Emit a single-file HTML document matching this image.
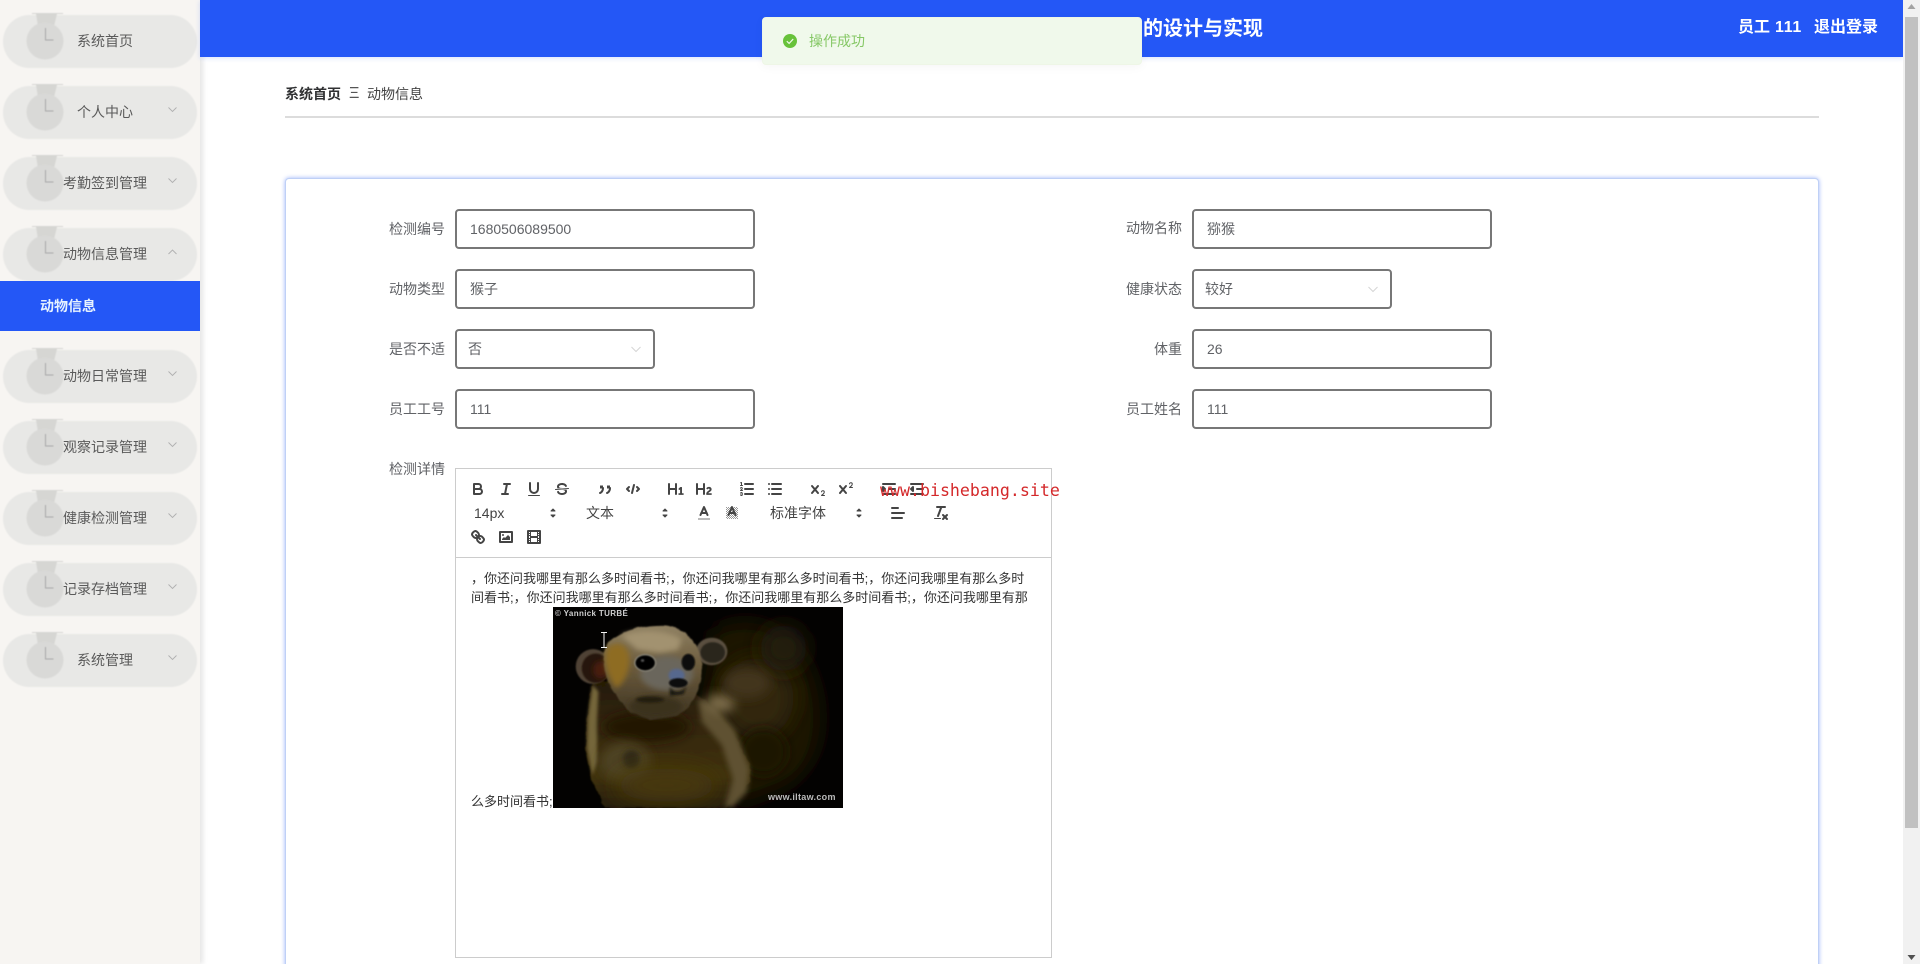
<!DOCTYPE html>
<html lang="zh-CN">
<head>
<meta charset="utf-8">
<title>动物信息</title>
<style>
*{box-sizing:border-box;margin:0;padding:0}
html,body{width:1920px;height:964px;overflow:hidden;background:#fff}
body{position:relative;font-family:"Liberation Sans","Noto Sans CJK SC",sans-serif;font-size:14px;color:#606266}
#w{position:absolute;left:0;top:0;width:1920px;height:964px;overflow:hidden;filter:blur(.3px)}
.a{position:absolute;white-space:nowrap}
#side{left:0;top:0;width:200px;height:964px;background:#f7f5f2;box-shadow:3px 0 5px rgba(0,0,0,.1)}
.pill{position:absolute;left:3px;width:194px;height:53px;border-radius:27px;background:#e8e8e6;filter:blur(.6px)}
.mt{position:absolute;left:5px;width:200px;text-align:center;line-height:20px;color:#5a5a5a;font-size:14px}
#sub{left:0;top:281px;width:200px;height:50px;background:#2457f6;color:#e6f2ff;font-weight:bold;line-height:50px;padding-left:40px}
#head{left:200px;top:0;width:1703px;height:57px;background:#2457f6;box-shadow:0 1px 5px rgba(36,87,246,.18)}
.ht{color:#fff;font-weight:bold;line-height:24px;top:16px}
#sb{left:1903px;top:0;width:17px;height:964px;background:#f1f1f1}
#thumb{position:absolute;left:2px;top:17px;width:13px;height:811px;background:#c1c1c1}
#toast{left:762px;top:17px;width:380px;height:48px;background:#f0f9eb;border:1px solid #eef6e6;border-radius:4px;box-shadow:0 2px 10px rgba(0,0,0,.04)}
#card{left:285px;top:178px;width:1534px;height:800px;background:#fff;border:1px solid #bfd0f6;border-radius:4px;box-shadow:0 0 4px rgba(36,87,246,.45)}
.lb{line-height:20px;color:#606266;text-align:right;width:100px}
.ip{position:absolute;height:40px;background:#fff;border:2px solid #777;border-radius:4px;line-height:36px;padding-left:13px;color:#606266;width:300px}
.sel{width:200px;padding-left:11px}
.sel svg{position:absolute;right:11px;top:15px}
#ed{left:455px;top:468px;width:597px;height:490px;background:#fff;border:1px solid #ccc}
#tb{position:absolute;left:0;top:88px;width:595px;height:1px;background:#ccc}
.pk{color:#444;font-size:14px;line-height:20px}
.ln{font-size:13px;line-height:18.5px;color:#333;left:471px}
#wm{left:880px;top:480px;font-family:"DejaVu Sans Mono","Liberation Mono",monospace;font-size:16.6px;line-height:22px;color:#d4282a}
.s{fill:none;stroke:#444;stroke-width:2;stroke-linecap:round;stroke-linejoin:round}
.t{fill:none;stroke:#444;stroke-width:1;stroke-linecap:round;stroke-linejoin:round}
.f{fill:#444}
.q{fill:#444;stroke:#444;stroke-width:2;stroke-linecap:round}
.ar{fill:#444;stroke:#444;stroke-width:1;stroke-linejoin:round}
</style>
</head>
<body>
<div id="w">

<div class="a" id="side">
  <div class="pill" style="top:15px"></div>
  <div class="pill" style="top:86px"></div>
  <div class="pill" style="top:157px"></div>
  <div class="pill" style="top:228px"></div>
  <div class="pill" style="top:350px"></div>
  <div class="pill" style="top:421px"></div>
  <div class="pill" style="top:492px"></div>
  <div class="pill" style="top:563px"></div>
  <div class="pill" style="top:634px"></div>

  <svg class="a" style="left:0;top:0;filter:blur(.6px)" width="200" height="700" viewBox="0 0 200 700">
    <g fill="#d9d9d7">
      <g transform="translate(0,0)"><path d="M32 13h31v1H57l-3 12H38l-2-12h-4z" fill="#d6d6d3"/><circle cx="45" cy="41" r="18.500"/><path d="M45.500 28v12h8" fill="none" stroke="#a8a8a8" stroke-width="1"/></g>
      <g transform="translate(0,71)"><path d="M32 13h31v1H57l-3 12H38l-2-12h-4z" fill="#d6d6d3"/><circle cx="45" cy="41" r="18.500"/><path d="M45.500 28v12h8" fill="none" stroke="#a8a8a8" stroke-width="1"/></g>
      <g transform="translate(0,142)"><path d="M32 13h31v1H57l-3 12H38l-2-12h-4z" fill="#d6d6d3"/><circle cx="45" cy="41" r="18.500"/><path d="M45.500 28v12h8" fill="none" stroke="#a8a8a8" stroke-width="1"/></g>
      <g transform="translate(0,213)"><path d="M32 13h31v1H57l-3 12H38l-2-12h-4z" fill="#d6d6d3"/><circle cx="45" cy="41" r="18.500"/><path d="M45.500 28v12h8" fill="none" stroke="#a8a8a8" stroke-width="1"/></g>
      <g transform="translate(0,335)"><path d="M32 13h31v1H57l-3 12H38l-2-12h-4z" fill="#d6d6d3"/><circle cx="45" cy="41" r="18.500"/><path d="M45.500 28v12h8" fill="none" stroke="#a8a8a8" stroke-width="1"/></g>
      <g transform="translate(0,406)"><path d="M32 13h31v1H57l-3 12H38l-2-12h-4z" fill="#d6d6d3"/><circle cx="45" cy="41" r="18.500"/><path d="M45.500 28v12h8" fill="none" stroke="#a8a8a8" stroke-width="1"/></g>
      <g transform="translate(0,477)"><path d="M32 13h31v1H57l-3 12H38l-2-12h-4z" fill="#d6d6d3"/><circle cx="45" cy="41" r="18.500"/><path d="M45.500 28v12h8" fill="none" stroke="#a8a8a8" stroke-width="1"/></g>
      <g transform="translate(0,548)"><path d="M32 13h31v1H57l-3 12H38l-2-12h-4z" fill="#d6d6d3"/><circle cx="45" cy="41" r="18.500"/><path d="M45.500 28v12h8" fill="none" stroke="#a8a8a8" stroke-width="1"/></g>
      <g transform="translate(0,619)"><path d="M32 13h31v1H57l-3 12H38l-2-12h-4z" fill="#d6d6d3"/><circle cx="45" cy="41" r="18.500"/><path d="M45.500 28v12h8" fill="none" stroke="#a8a8a8" stroke-width="1"/></g>
    </g>
  </svg>
  <svg class="a" style="left:0;top:0" width="200" height="700" viewBox="0 0 200 700">
    <g fill="none" stroke="#b0b0b0" stroke-width=".9">
      <path d="M168.500 107.500l4 4 4-4"/>
      <path d="M168.500 178.500l4 4 4-4"/>
      <path d="M176.500 254l-4-4-4 4"/>
      <path d="M168.500 371.500l4 4 4-4"/>
      <path d="M168.500 442.500l4 4 4-4"/>
      <path d="M168.500 513.500l4 4 4-4"/>
      <path d="M168.500 584.500l4 4 4-4"/>
      <path d="M168.500 655.500l4 4 4-4"/>
    </g>
  </svg>

  <div class="mt" style="top:31px">系统首页</div>
  <div class="mt" style="top:102px">个人中心</div>
  <div class="mt" style="top:173px">考勤签到管理</div>
  <div class="mt" style="top:244px">动物信息管理</div>
  <div class="mt" style="top:366px">动物日常管理</div>
  <div class="mt" style="top:437px">观察记录管理</div>
  <div class="mt" style="top:508px">健康检测管理</div>
  <div class="mt" style="top:579px">记录存档管理</div>
  <div class="mt" style="top:650px">系统管理</div>
</div>
<div class="a" id="sub">动物信息</div>

<div class="a" id="head"></div>
<div class="a ht" style="left:1143px;top:17px;font-size:20px;">的设计与实现</div>
<div class="a ht" style="left:1738px;font-size:16px;">员工</div>
<div class="a ht" style="left:1775px;font-size:16px;letter-spacing:.7px">111</div>
<div class="a ht" style="left:1814px;font-size:16px;">退出登录</div>

<div class="a" id="sb">
  <svg class="a" style="left:0;top:0" width="17" height="17"><path d="M8.500 4L12.500 9H4.500z" fill="#a3a3a3"/></svg>
  <div id="thumb"></div>
  <svg class="a" style="left:0;top:947px" width="17" height="17"><path d="M8.500 13L4.500 8H12.500z" fill="#505050"/></svg>
</div>

<div class="a" style="left:285px;top:84px;font-weight:bold;color:#303133;line-height:20px">系统首页</div>
<div class="a" style="left:349px;top:84px;color:#555;font-size:16px;line-height:20px;font-weight:normal">Ξ</div>
<div class="a" style="left:367px;top:84px;color:#444;line-height:20px">动物信息</div>
<div class="a" style="left:285px;top:116px;width:1534px;height:2px;background:#dcdcdc"></div>

<div class="a" id="card"></div>

<div class="a lb" style="left:345px;top:219px">检测编号</div>
<div class="ip" style="left:455px;top:209px">1680506089500</div>
<div class="a lb" style="left:345px;top:279px">动物类型</div>
<div class="ip" style="left:455px;top:269px">猴子</div>
<div class="a lb" style="left:345px;top:339px">是否不适</div>
<div class="ip sel" style="left:455px;top:329px">否<svg width="12" height="8"><path d="M1.500 1l4.500 4.500 4.500-4.500" fill="none" stroke="#d5d5d5" stroke-width="1"/></svg></div>
<div class="a lb" style="left:345px;top:399px">员工工号</div>
<div class="ip" style="left:455px;top:389px">111</div>
<div class="a lb" style="left:345px;top:459px">检测详情</div>

<div class="a lb" style="left:1082px;top:218px">动物名称</div>
<div class="ip" style="left:1192px;top:209px">猕猴</div>
<div class="a lb" style="left:1082px;top:279px">健康状态</div>
<div class="ip sel" style="left:1192px;top:269px">较好<svg width="12" height="8"><path d="M1.500 1l4.500 4.500 4.500-4.500" fill="none" stroke="#d5d5d5" stroke-width="1"/></svg></div>
<div class="a lb" style="left:1082px;top:339px">体重</div>
<div class="ip" style="left:1192px;top:329px">26</div>
<div class="a lb" style="left:1082px;top:399px">员工姓名</div>
<div class="ip" style="left:1192px;top:389px">111</div>

<div class="a" id="ed"><div id="tb"></div></div>

<svg class="a" style="left:0;top:0" width="1200" height="560" viewBox="0 0 1200 560">
  <g transform="translate(469,480)"><path class="s" d="M5,4H9.500A2.500,2.500,0,0,1,12,6.500v0A2.500,2.500,0,0,1,9.500,9H5V4Z"/><path class="s" d="M5,9h5.500A2.500,2.500,0,0,1,13,11.500v0A2.500,2.500,0,0,1,10.500,14H5V9Z"/></g>
  <g transform="translate(497,480)"><line class="s" x1="7" x2="13" y1="4" y2="4"/><line class="s" x1="5" x2="11" y1="14" y2="14"/><line class="s" x1="8" x2="10" y1="14" y2="4"/></g>
  <g transform="translate(525,480)"><path class="s" d="M5,3V9a4.012,4.012,0,0,0,4,4H9a4.012,4.012,0,0,0,4-4V3"/><rect class="f" height="1" rx=".5" ry=".5" width="12" x="3" y="15"/></g>
  <g transform="translate(553,480)"><line class="t" x1="15.500" x2="2.500" y1="8.500" y2="9.500"/><path class="f" d="M9.007,8C6.542,7.791,6,7.519,6,6.500,6,5.792,7.283,5,9,5c1.571,0,2.765.679,2.969,1.309a1,1,0,0,0,1.900-.617C13.356,4.106,11.354,3,9,3,6.200,3,4,4.538,4,6.500a3.200,3.200,0,0,0,.5,1.843Z"/><path class="f" d="M8.984,10C11.457,10.208,12,10.479,12,11.500c0,.708-1.283,1.500-3,1.500-1.571,0-2.765-.679-2.969-1.309a1,1,0,1,0-1.900.617C4.644,13.894,6.646,15,9,15c2.800,0,5-1.538,5-3.500a3.200,3.200,0,0,0-.5-1.843Z"/></g>
  <g transform="translate(596,480)"><rect class="f" height="3" width="3" x="4" y="5.500"/><rect class="f" height="3" width="3" x="11" y="5.500"/><path class="q" d="M7,8c0,4.031-3,5-3,5"/><path class="q" d="M14,8c0,4.031-3,5-3,5"/></g>
  <g transform="translate(624,480)"><polyline class="s" points="5 7 3 9 5 11"/><polyline class="s" points="13 7 15 9 13 11"/><line class="s" x1="10" x2="8" y1="5" y2="13"/></g>
  <g transform="translate(667,480)"><path class="f" d="M10,4V14a1,1,0,0,1-2,0V10H3v4a1,1,0,0,1-2,0V4A1,1,0,0,1,3,4V8H8V4a1,1,0,0,1,2,0Zm6.068,9.209H14.990V7.599a.541.541,0,0,0-.605-.605h-.627a1.011,1.011,0,0,0-.748.297L11.645,8.566a.544.544,0,0,0-.022.858l.286.308a.539.539,0,0,0,.847.033l.099-.088a1.214,1.214,0,0,0,.242-.353h.022s-.011.309-.011.605V13.209H12.041a.541.541,0,0,0-.605.605v.439a.541.541,0,0,0,.605.605h4.027a.541.541,0,0,0,.605-.605v-.439A.541.541,0,0,0,16.068,13.209Z"/></g>
  <g transform="translate(695,480)"><path class="f" d="M16.740,13.814v.439a.541.541,0,0,1-.605.605H11.855a.584.584,0,0,1-.649-.605V14.013c0-2.905,3.399-3.422,3.399-4.555a.777.777,0,0,0-.847-.781,1.177,1.177,0,0,0-.836.385c-.275.264-.561.374-.858.132l-.429-.341c-.308-.242-.385-.518-.154-.814a2.972,2.972,0,0,1,2.454-1.177,2.454,2.454,0,0,1,2.684,2.409c0,2.453-3.179,2.927-3.278,3.938h2.794A.541.541,0,0,1,16.740,13.814ZM9,3A1,1,0,0,0,8,4V8H3V4A1,1,0,0,0,1,4V14a1,1,0,0,0,2,0V10H8v4a1,1,0,0,0,2,0V4A1,1,0,0,0,9,3Z"/></g>
  <g transform="translate(738,480)"><line class="s" x1="7" x2="15" y1="4" y2="4"/><line class="s" x1="7" x2="15" y1="9" y2="9"/><line class="s" x1="7" x2="15" y1="14" y2="14"/><line class="t" x1="2.500" x2="4.500" y1="5.500" y2="5.500"/><path class="f" d="M3.500,6A0.500,0.500,0,0,1,3,5.500V3.085l-0.276.138A0.500,0.500,0,0,1,2.053,3c-0.124-.247-0.023-0.324.224-0.447l1-.5A0.500,0.500,0,0,1,4,2.500v3A0.500,0.500,0,0,1,3.500,6Z"/><path class="t" d="M4.500,10.500h-2c0-.234,1.850-1.076,1.850-2.234A0.959,0.959,0,0,0,2.500,8.156"/><path class="t" d="M2.500,14.846a0.959,0.959,0,0,0,1.850-.109A0.700,0.700,0,0,0,3.750,14a0.688,0.688,0,0,0,.6-0.736,0.959,0.959,0,0,0-1.850-.109"/></g>
  <g transform="translate(766,480)"><line class="s" x1="6" x2="15" y1="4" y2="4"/><line class="s" x1="6" x2="15" y1="9" y2="9"/><line class="s" x1="6" x2="15" y1="14" y2="14"/><line class="s" x1="3" x2="3" y1="4" y2="4"/><line class="s" x1="3" x2="3" y1="9" y2="9"/><line class="s" x1="3" x2="3" y1="14" y2="14"/></g>
  <g transform="translate(809,480)"><path class="f" d="M15.500,15H13.861a3.858,3.858,0,0,0,1.914-2.975,1.800,1.800,0,0,0-1.600-1.751A1.921,1.921,0,0,0,12.021,11.700a0.500,0.500,0,1,0,.957.291h0a0.914,0.914,0,0,1,1.053-.725,0.810,0.810,0,0,1,.744.762c0,1.076-1.170,1.870-1.940,2.431A1.456,1.456,0,0,0,12,15.500a0.500,0.500,0,0,0,.5.5h3A0.500,0.500,0,0,0,15.500,15Z"/><path class="f" d="M9.650,5.241a1,1,0,0,0-1.409.108L6,7.964,3.759,5.349A1,1,0,0,0,2.241,6.651L4.684,9.500,2.241,12.350A1,1,0,0,0,3.759,13.650L6,11.036,8.241,13.650a1,1,0,1,0,1.518-1.300L7.316,9.500,9.759,6.651A1,1,0,0,0,9.650,5.241Z"/></g>
  <g transform="translate(837,480)"><path class="f" d="M15.500,7H13.861a4.015,4.015,0,0,0,1.914-2.975,1.800,1.800,0,0,0-1.600-1.751A1.922,1.922,0,0,0,12.021,3.700a0.500,0.500,0,1,0,.957.291,0.917,0.917,0,0,1,1.053-.725,0.810,0.810,0,0,1,.744.762c0,1.077-1.164,1.925-1.934,2.486A1.423,1.423,0,0,0,12,7.500a0.500,0.500,0,0,0,.5.5h3A0.500,0.500,0,0,0,15.500,7Z"/><path class="f" d="M9.651,5.241a1,1,0,0,0-1.410.108L6,7.964,3.759,5.349a1,1,0,1,0-1.519,1.300L4.683,9.500,2.241,12.350a1,1,0,1,0,1.519,1.300L6,11.036,8.241,13.650a1,1,0,0,0,1.519-1.300L7.317,9.500,9.759,6.651A1,1,0,0,0,9.651,5.241Z"/></g>
  <g transform="translate(880,480)"><line class="s" x1="3" x2="15" y1="14" y2="14"/><line class="s" x1="3" x2="15" y1="4" y2="4"/><line class="s" x1="9" x2="15" y1="9" y2="9"/><polyline class="s f" points="3 7 3 11 5 9 3 7"/></g>
  <g transform="translate(908,480)"><line class="s" x1="3" x2="15" y1="14" y2="14"/><line class="s" x1="3" x2="15" y1="4" y2="4"/><line class="s" x1="9" x2="15" y1="9" y2="9"/><polyline class="s f" points="5 7 5 11 3 9 5 7"/></g>

  <g transform="translate(544,504)"><polygon class="ar" points="7 11 9 13 11 11 7 11"/><polygon class="ar" points="7 7 9 5 11 7 7 7"/></g>
  <g transform="translate(656,504)"><polygon class="ar" points="7 11 9 13 11 11 7 11"/><polygon class="ar" points="7 7 9 5 11 7 7 7"/></g>
  <g transform="translate(850,504)"><polygon class="ar" points="7 11 9 13 11 11 7 11"/><polygon class="ar" points="7 7 9 5 11 7 7 7"/></g>
  <g transform="translate(695,504)"><line x1="3" x2="15" y1="15" y2="15" stroke="#bbb" stroke-width="2"/><polyline class="s" points="5.500 11 9 3 12.500 11"/><line class="s" x1="11.630" x2="6.380" y1="9" y2="9"/></g>
  <defs><pattern id="hatch" width="2" height="2" patternUnits="userSpaceOnUse"><rect width="1" height="1" fill="#444"/><rect x="1" y="1" width="1" height="1" fill="#444"/></pattern></defs>
  <g transform="translate(723,504)"><rect x="3" y="3" width="12" height="12" fill="url(#hatch)" opacity=".55"/><polyline class="s" points="5.500 11 9 3 12.500 11"/><line class="s" x1="11.630" x2="6.380" y1="9" y2="9"/></g>
  <g transform="translate(889,504)"><line class="s" x1="3" x2="15" y1="9" y2="9"/><line class="s" x1="3" x2="13" y1="14" y2="14"/><line class="s" x1="3" x2="9" y1="4" y2="4"/></g>
  <g transform="translate(932,504)"><line class="s" x1="5" x2="13" y1="3" y2="3"/><line class="s" x1="6" x2="9.350" y1="12" y2="3"/><line class="s" x1="11" x2="15" y1="11" y2="15"/><line class="s" x1="15" x2="11" y1="11" y2="15"/><rect class="f" height="1" rx=".5" ry=".5" width="7" x="2" y="14"/></g>

  <g transform="translate(469,528)"><line class="s" x1="7" x2="11" y1="7" y2="11"/><path class="s" d="M8.900,4.577a3.476,3.476,0,0,1,.36,4.679A3.476,3.476,0,0,1,4.577,8.900C3.185,7.500,2.035,6.400,4.217,4.217S7.500,3.185,8.900,4.577Z"/><path class="s" d="M13.423,9.100a3.476,3.476,0,0,0-4.679-.36,3.476,3.476,0,0,0,.36,4.679c1.392,1.392,2.500,2.542,4.679.36S14.815,10.500,13.423,9.100Z"/></g>
  <g transform="translate(497,528)"><rect class="s" height="10" width="12" x="3" y="4"/><circle class="f" cx="6" cy="7" r="1"/><polyline class="f" points="5 12 5 11 7 9 8 10 11 7 13 9 13 12 5 12"/></g>
  <g transform="translate(525,528)"><rect class="s" height="12" width="12" x="3" y="3"/><rect class="f" height="12" width="1" x="5" y="3"/><rect class="f" height="12" width="1" x="12" y="3"/><rect class="f" height="2" width="8" x="5" y="8"/><rect class="f" height="1" width="3" x="3" y="5"/><rect class="f" height="1" width="3" x="3" y="7"/><rect class="f" height="1" width="3" x="3" y="10"/><rect class="f" height="1" width="3" x="3" y="12"/><rect class="f" height="1" width="3" x="12" y="5"/><rect class="f" height="1" width="3" x="12" y="7"/><rect class="f" height="1" width="3" x="12" y="10"/><rect class="f" height="1" width="3" x="12" y="12"/></g>
</svg>

<div class="a pk" style="left:474px;top:503px">14px</div>
<div class="a pk" style="left:586px;top:503px">文本</div>
<div class="a pk" style="left:770px;top:503px">标准字体</div>

<div class="a ln" style="top:570px">，你还问我哪里有那么多时间看书;，你还问我哪里有那么多时间看书;，你还问我哪里有那么多时</div>
<div class="a ln" style="top:588.500px">间看书;，你还问我哪里有那么多时间看书;，你还问我哪里有那么多时间看书;，你还问我哪里有那</div>
<div class="a ln" style="top:793px">么多时间看书;</div>

<div class="a" style="left:553px;top:607px;width:290px;height:201px;background:#030201;overflow:hidden">
  <svg class="a" style="left:0;top:0" width="290" height="201" viewBox="10 7 868 601" preserveAspectRatio="none">
    <defs>
      <filter id="b30" x="-50%" y="-50%" width="200%" height="200%"><feGaussianBlur stdDeviation="30"/></filter>
      <filter id="b16" x="-40%" y="-40%" width="180%" height="180%"><feGaussianBlur stdDeviation="16"/></filter>
      <filter id="b8" x="-30%" y="-30%" width="160%" height="160%"><feGaussianBlur stdDeviation="8"/></filter>
      <filter id="b5" x="-30%" y="-30%" width="160%" height="160%"><feGaussianBlur stdDeviation="5"/></filter>
      <filter id="b4" x="-30%" y="-30%" width="160%" height="160%"><feGaussianBlur stdDeviation="4"/></filter>
      <filter id="b2" x="-30%" y="-30%" width="160%" height="160%"><feGaussianBlur stdDeviation="2"/></filter>
      <filter id="fur" x="-10%" y="-10%" width="120%" height="120%"><feTurbulence type="fractalNoise" baseFrequency=".03 .05" numOctaves="2" seed="7" result="n"/><feDisplacementMap in="SourceGraphic" in2="n" scale="10" xChannelSelector="R" yChannelSelector="G"/><feGaussianBlur stdDeviation="2.500"/></filter>
      <linearGradient id="bd" x1="0" y1="0" x2="0" y2="1"><stop offset="0" stop-color="#241a06"/><stop offset=".35" stop-color="#33260a"/><stop offset=".75" stop-color="#403209"/><stop offset="1" stop-color="#261e07"/></linearGradient>
      <linearGradient id="hd" x1="0" y1="0" x2="0" y2="1"><stop offset="0" stop-color="#8f8062"/><stop offset=".45" stop-color="#6a5a3c"/><stop offset="1" stop-color="#3c3220"/></linearGradient>
    </defs>
    <path d="M490 80C560 30 700 40 770 170C840 310 820 500 690 550L560 600L450 300Z" fill="#1d1605" filter="url(#b30)"/>
    <ellipse cx="620" cy="280" rx="110" ry="120" fill="#30260f" filter="url(#b30)"/>
    <ellipse cx="700" cy="130" rx="70" ry="70" fill="#241b08" filter="url(#b30)"/>
    <ellipse cx="640" cy="440" rx="70" ry="70" fill="#1e1706" filter="url(#b16)"/>
    <path d="M130 225L112 340L108 430L125 520L165 608H530L600 530L600 480L540 370L470 290L430 260L300 240Z" fill="url(#bd)" filter="url(#fur)"/>
    <path d="M128 240L114 340L112 430L128 510L142 470L142 340L146 260Z" fill="#75663a" filter="url(#b5)"/>
    <path d="M445 280L500 310L555 375L598 490L590 560L545 608L525 600L548 520L515 420L455 350Z" fill="#5e5130" filter="url(#b8)"/>
    <ellipse cx="510" cy="295" rx="45" ry="28" fill="#7a6b48" filter="url(#b16)"/>
    <ellipse cx="590" cy="235" rx="70" ry="45" fill="#42351a" filter="url(#b16)"/>
    <ellipse cx="290" cy="365" rx="130" ry="45" fill="#241806" filter="url(#b16)"/>
    <ellipse cx="225" cy="470" rx="75" ry="60" fill="#4e4320" filter="url(#b16)"/>
    <ellipse cx="245" cy="462" rx="26" ry="28" fill="#332a12" filter="url(#b8)"/>
    <ellipse cx="350" cy="540" rx="150" ry="50" fill="#473807" filter="url(#b30)"/>
    <circle cx="130" cy="185" r="52" fill="#4f4236" filter="url(#b2)"/>
    <ellipse cx="138" cy="190" rx="42" ry="44" fill="#26130b" filter="url(#b2)"/>
    <ellipse cx="152" cy="195" rx="22" ry="26" fill="#481c0e" filter="url(#b8)"/>
    <ellipse cx="485" cy="140" rx="47" ry="41" fill="#5a5041" filter="url(#b2)"/>
    <ellipse cx="488" cy="143" rx="37" ry="31" fill="#2b271e" filter="url(#b2)"/>
    <path d="M165 130C190 85 270 60 340 62C400 65 445 110 455 170C462 230 440 300 380 332L300 345L240 320C190 270 150 210 165 130Z" fill="url(#hd)" filter="url(#fur)"/>
    <path d="M172 130C198 108 228 112 238 150C243 190 228 232 198 250C172 212 158 170 172 130Z" fill="#8e6c24" filter="url(#b8)"/>
    <path d="M215 92C262 72 345 72 395 102L385 135L330 145L262 135Z" fill="#a29270" filter="url(#b8)"/>
    <ellipse cx="350" cy="205" rx="80" ry="52" fill="#6b665b" filter="url(#b8)"/>
    <ellipse cx="318" cy="305" rx="80" ry="32" fill="#3a301d" filter="url(#b8)"/>
    <ellipse cx="300" cy="284" rx="42" ry="9" fill="#211a0e" filter="url(#b4)"/>
    <ellipse cx="286" cy="174" rx="33" ry="26" fill="#8f8b7d" filter="url(#b2)"/>
    <ellipse cx="286" cy="174" rx="29" ry="22.500" fill="#060505" filter="url(#b2)"/>
    <ellipse cx="278" cy="167" rx="5" ry="4" fill="#555" filter="url(#b2)"/>
    <ellipse cx="415" cy="172" rx="20" ry="25" fill="#0b0a07" filter="url(#b2)"/>
    <ellipse cx="380" cy="211" rx="24" ry="19" fill="#56688e" filter="url(#b4)"/>
    <ellipse cx="385" cy="234" rx="28" ry="14" fill="#0e0d10" filter="url(#b2)"/>
    <path d="M360 245C370 268 400 265 412 240L400 268L360 272Z" fill="#15120c" filter="url(#b4)"/>
  </svg>
  <div class="a" style="left:2px;top:1px;font:bold 8px/12px 'Liberation Sans',sans-serif;color:#cfcfcf;letter-spacing:.35px">© Yannick TURBÉ</div>
  <div class="a" style="left:215px;top:184px;font:bold 9px/12px 'Liberation Sans',sans-serif;color:#bbb;letter-spacing:.3px">www.iltaw.com</div>
  <svg class="a" style="left:47px;top:25px" width="8" height="18"><path d="M1 .5h6M4 .5v15M1 15.500h6" stroke="#f4f4f4" stroke-width="1" fill="none"/></svg>
</div>

<div class="a" id="wm">www.bishebang.site</div>

<div class="a" id="toast"></div>
<svg class="a" style="left:783px;top:34px" width="14" height="14" viewBox="0 0 14 14"><circle cx="7" cy="7" r="7" fill="#67c23a"/><path d="M3.800 7.200l2.300 2.200 4.100-4.300" fill="none" stroke="#f0f9eb" stroke-width="1.200"/></svg>
<div class="a" style="left:809px;top:31px;color:#86c866;line-height:20px">操作成功</div>

</div>
</body>
</html>
